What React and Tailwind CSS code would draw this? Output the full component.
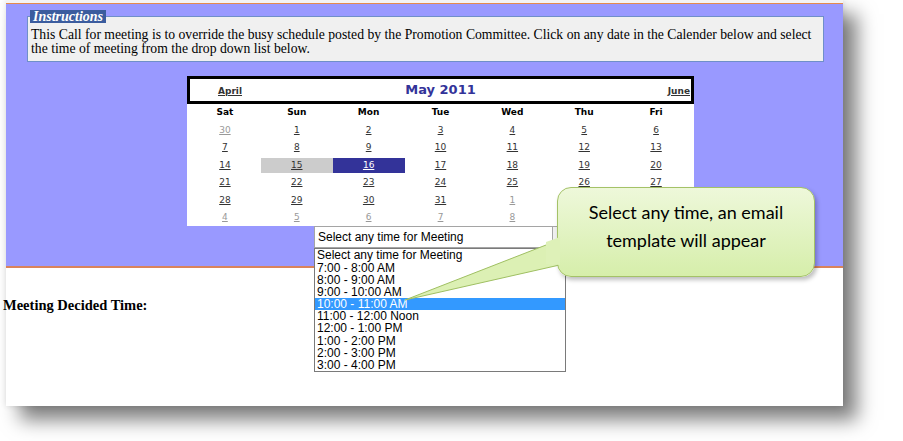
import React from 'react'

const rows = [
  [['30', 1], ['1'], ['2'], ['3'], ['4'], ['5'], ['6']],
  [['7'], ['8'], ['9'], ['10'], ['11'], ['12'], ['13']],
  [['14'], ['15', 2], ['16', 3], ['17'], ['18'], ['19'], ['20']],
  [['21'], ['22'], ['23'], ['24'], ['25'], ['26'], ['27']],
  [['28'], ['29'], ['30'], ['31'], ['1', 1], ['2', 1], ['3', 1]],
  [['4', 1], ['5', 1], ['6', 1], ['7', 1], ['8', 1], ['9', 1], ['10', 1]],
]

const days = ['Sat', 'Sun', 'Mon', 'Tue', 'Wed', 'Thu', 'Fri']

const times = [
  'Select any time for Meeting',
  '7:00 - 8:00 AM',
  '8:00 - 9:00 AM',
  '9:00 - 10:00 AM',
  '10:00 - 11:00 AM',
  '11:00 - 12:00 Noon',
  '12:00 - 1:00 PM',
  '1:00 - 2:00 PM',
  '2:00 - 3:00 PM',
  '3:00 - 4:00 PM',
]

function DayCell({ label, kind }) {
  let cls = 'text-[#333]'
  if (kind === 1) cls = 'text-[#999]'
  if (kind === 2) cls = 'bg-[#cccccc] text-[#333]'
  if (kind === 3) cls = 'bg-[#333399] text-white'
  return (
    <div className={`flex items-center justify-center underline ${cls}`}>{label}</div>
  )
}

function Calendar() {
  return (
    <div className="ml-[181px] mt-[14px] w-[507px] bg-white font-['DejaVu_Sans',sans-serif] text-[9px]">
      <div className="flex h-[28px] items-end border-[3px] border-black bg-white pb-[3px]">
        <span className="w-[120px] pl-[28px] font-bold text-[#333] underline">April</span>
        <span className="flex-1 self-center pt-[2px] text-center text-[13px] font-bold text-[#333399]">May 2011</span>
        <span className="w-[120px] pr-[1px] text-right font-bold text-[#333] underline">June</span>
      </div>
      <div className="px-[2px]">
        <div className="grid h-[18px] grid-cols-7 items-center font-bold text-black">
          {days.map((d) => (
            <div key={d} className="text-center">{d}</div>
          ))}
        </div>
        {rows.map((r, i) => (
          <div key={i} className="grid h-[17.4px] grid-cols-7 py-[1px]">
            {r.map(([label, kind], j) => (
              <DayCell key={j} label={label} kind={kind} />
            ))}
          </div>
        ))}
      </div>
    </div>
  )
}

function TimeSelect() {
  return (
    <div className="relative ml-[308px] w-[252px] font-['Liberation_Sans',Arial,sans-serif] text-[12px] text-black">
      <div className="flex h-[22px] items-center border border-[#a5a5a5] bg-white pl-[3px]">
        <span className="flex-1">Select any time for Meeting</span>
        <span className="h-full w-[13px] border-l border-[#a5a5a5] bg-[#f0f0f0]" />
      </div>
      <div className="absolute left-0 top-[22px] w-full border border-[#7a7a7a] bg-white">
        {times.map((t, i) => (
          <div
            key={t}
            className={`h-[12.2px] pl-[2px] leading-[12px] ${i === 4 ? 'bg-[#3399ff] text-white' : ''}`}
          >
            {t}
          </div>
        ))}
      </div>
    </div>
  )
}

function Callout() {
  return (
    <>
      <svg
        className="absolute left-[398px] top-[232px]"
        width="162"
        height="72"
        viewBox="0 0 162 72"
      >
        <polygon points="160,6 1,68 160,32" fill="#dcf0b4" stroke="#9fbf62" strokeWidth="1" />
      </svg>
      <div className="absolute left-[551px] top-[187px] flex h-[90px] w-[258px] flex-col items-center rounded-[14px] border border-[#a4c267] bg-gradient-to-b from-[#eef8da] to-[#d6eeaa] pt-[10px] font-['Lato','Open_Sans',sans-serif] text-[18px] leading-[28px] text-black shadow-[2px_3px_4px_rgba(0,0,0,0.25)]">
        <span>Select any time, an email</span>
        <span>template will appear</span>
      </div>
      <svg
        className="absolute left-[540px] top-[236px]"
        width="14"
        height="30"
        viewBox="0 0 14 30"
      >
        <polygon points="0,6 14,1 14,29 0,28" fill="#def1b8" />
      </svg>
    </>
  )
}

export default function App() {
  return (
    <div className="relative h-[441px] w-[903px] overflow-hidden bg-white">
      <div className="absolute left-[6px] top-0 h-[406px] w-[837px] bg-white shadow-[0_0_6px_rgba(0,0,0,0.12),14px_14px_18px_rgba(0,0,0,0.5)]">
        <div className="h-[3px] bg-[#f4f4f4]" />
        <div className="h-[1px] bg-[#e58a4e]" />
        <div className="relative h-[262px] bg-[#9999ff] pt-[6px]">
          <fieldset className="ml-[21px] w-[797px] border border-[#6f8fc9] bg-[#f0f0f0] px-[3px] pt-[5px] pb-[5px] font-['Liberation_Serif',serif] text-[13.7px] leading-[14px] text-black">
            <legend className="ml-[-1px] bg-[#3b5c9e] px-[3px] text-[14px] font-bold italic leading-[13px] text-white">
              Instructions
            </legend>
            <p>
              This Call for meeting is to override the busy schedule posted by the Promotion Committee. Click on any
              date in the Calender below and select
              <br />
              the time of meeting from the drop down list below.
            </p>
          </fieldset>
          <Calendar />
          <TimeSelect />
        </div>
        <div className="h-[2px] bg-[#d9835c]" />
        <div className="mt-[27px] ml-[-3px] font-['Liberation_Serif',serif] text-[14.5px] font-bold text-black">
          Meeting Decided Time:
        </div>
        <Callout />
      </div>
    </div>
  )
}
